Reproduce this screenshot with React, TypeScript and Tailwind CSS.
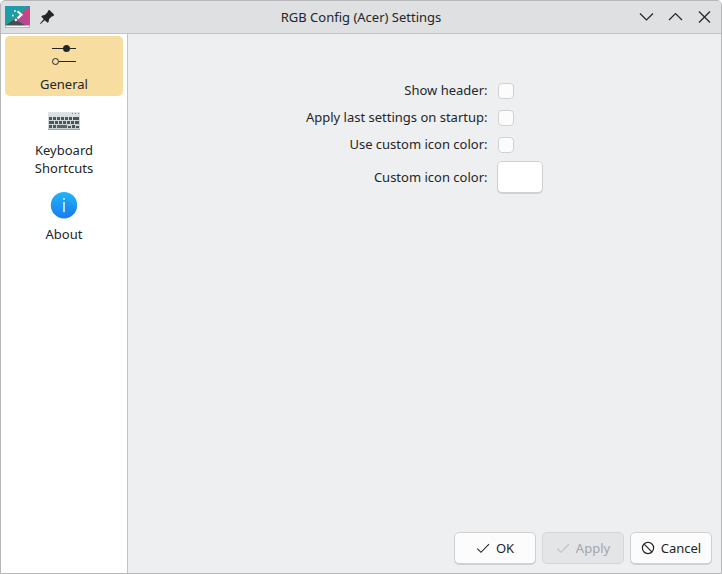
import React from "react";

function AppIcon() {
  return (
    <svg className="block h-[23px] w-[25px]" viewBox="0 0 25 23">
      <defs>
        <linearGradient id="teal" x1="0" y1="0" x2="1" y2="1">
          <stop offset="0" stopColor="#169fb4" />
          <stop offset="1" stopColor="#369586" />
        </linearGradient>
        <linearGradient id="pink" x1="0" y1="1" x2="1" y2="0">
          <stop offset="0" stopColor="#a24c9c" />
          <stop offset="1" stopColor="#d8417c" />
        </linearGradient>
      </defs>
      <rect width="25" height="20" fill="url(#teal)" />
      <path d="M25 0 9.500 13 21 20H25Z" fill="url(#pink)" />
      <path d="M0 20 9.500 13 21 20Z" fill="#45504f" />
      <path d="m12.500 5.200 4 3.600-4 3.600" fill="none" stroke="#fff" strokeWidth="2.100" />
      <circle cx="10" cy="5" r=".9" fill="#e6ffff" />
      <circle cx="7.800" cy="9.500" r=".9" fill="#e6ffff" />
      <circle cx="10.800" cy="14" r="1.200" fill="#fff" />
      <rect y="19.500" width="25" height="1.500" fill="#fbfbfb" />
      <rect y="20" width="1" height="2" fill="#a8adaf" />
      <rect x="24" y="20" width="1" height="2" fill="#a8adaf" />
      <rect x="1" y="21" width="23" height="1" fill="#b5b9bb" />
    </svg>
  );
}

function PinIcon() {
  return (
    <svg className="block h-4 w-4" viewBox="0 0 16 16" fill="#232629">
      <path d="M10.500 1 15 5.500 14.600 7 12.700 7.400 10 10.200 9.700 12.700 8.600 13.700 5.700 11.200 1.500 15 1 14.500 4.700 10.200 2.300 7.500 3.300 6.400 5.800 6 8.600 3.300 9 1.500Z" />
    </svg>
  );
}

function SlidersIcon() {
  return (
    <svg className="block h-8 w-8" viewBox="0 0 32 32" fill="none" stroke="#232629">
      <path d="M4 9.500H28M11 22.500H28" />
      <circle cx="18.500" cy="9.500" r="3.500" fill="#232629" stroke="none" />
      <circle cx="7.500" cy="22.500" r="3" />
    </svg>
  );
}

const keys: [number, number, number][] = [
  [1, 5, 3], [5, 5, 3], [9, 5, 3], [13, 5, 3], [17, 5, 3], [21, 5, 3], [25, 5, 6],
  [1, 9, 5], [7, 9, 3], [11, 9, 3], [15, 9, 3], [19, 9, 3], [23, 9, 3], [27, 9, 4],
  [1, 13, 3], [5, 13, 3], [9, 13, 10], [20, 14, 3], [24, 13, 3], [28, 14, 3],
];

function KeyboardIcon() {
  return (
    <svg className="block h-[18px] w-8" viewBox="0 0 32 18" shapeRendering="crispEdges">
      <defs>
        <linearGradient id="case" x1="0" y1="0" x2="0" y2="1">
          <stop offset="0" stopColor="#dde3e5" />
          <stop offset="1" stopColor="#c8d0d4" />
        </linearGradient>
      </defs>
      <rect width="32" height="18" fill="url(#case)" />
      <rect y="17" width="32" height="1" fill="#9aa4aa" />
      {keys.map(([x, y, w]) => (
        <rect key={`${x}-${y}`} x={x} y={y} width={w} height={y === 14 ? 2 : 3} fill={w === 10 ? "#566861" : "#4b5755"} />
      ))}
      <path d="M24 1h1v1h-1zM27 1h1v1h-1zM30 1h1v1h-1z" fill="#1abc7c" />
    </svg>
  );
}

function InfoIcon() {
  return (
    <svg className="block h-8 w-8" viewBox="0 0 32 32">
      <defs>
        <linearGradient id="blue" x1="0" y1="0" x2="0" y2="1">
          <stop offset="0" stopColor="#1fb4fa" />
          <stop offset="1" stopColor="#1d7df2" />
        </linearGradient>
      </defs>
      <circle cx="16" cy="16.200" r="13.200" fill="url(#blue)" />
      <path d="m17 9 11 11a13 13 0 0 1-10 9l-1-6Z" fill="#126fd8" opacity=".15" />
      <path d="M15 9h2v2h-2zM15 13h2v10h-2z" fill="#b5dffd" />
    </svg>
  );
}

function CheckIcon() {
  return (
    <svg className="block h-4 w-4" viewBox="0 0 16 16" fill="none" stroke="currentColor" strokeWidth="1.100">
      <path d="M2.300 8.700 6 12.300 14 4.200" />
    </svg>
  );
}

function CancelIcon() {
  return (
    <svg className="block h-4 w-4" viewBox="0 0 16 16" fill="none" stroke="currentColor" strokeWidth="1.200">
      <circle cx="8" cy="8" r="5.600" />
      <path d="m4.100 4.100 7.800 7.800" />
    </svg>
  );
}

function WindowGlyph({ d }: { d: string }) {
  return (
    <svg className="block h-4 w-4" viewBox="0 0 16 16" fill="none" stroke="#232629" strokeWidth="1.200">
      <path d={d} />
    </svg>
  );
}

function CheckRow({ label }: { label: string }) {
  return (
    <label className="flex h-[27px] items-center">
      <span className="w-[359.5px] pb-px text-right">{label}</span>
      <input type="checkbox" className="ml-[10.5px] h-4 w-4 appearance-none rounded-[4px] border border-[#cfd1d2] bg-[#fcfcfc]" />
    </label>
  );
}

function DialogButton({ icon, label, disabled = false }: { icon: React.ReactNode; label: string; disabled?: boolean }) {
  return (
    <button
      disabled={disabled}
      className={`flex h-8 w-[82px] items-center justify-center gap-[5px] rounded-[5px] border pr-px ${
        disabled ? "border-[#d5d6d8] bg-[#e3e5e7] text-[#a4a6a8]" : "border-[#cfd0d2] bg-[#fcfcfc] shadow-[0_1px_0_#d0d1d3]"
      }`}
    >
      <span className={disabled ? "opacity-60" : ""}>{icon}</span>
      <span>{label}</span>
    </button>
  );
}

export default function App() {
  return (
    <div className="flex h-[574px] w-[722px] flex-col overflow-hidden rounded-t-[5px] border border-[#b6b7b9] bg-[#eeeff1] font-['Noto_Sans',sans-serif] text-[13px] leading-[18px] text-[#232629]">
      <header className="flex h-[33px] shrink-0 items-center border-b border-[#c2c3c5] bg-[#dee0e2]">
        <div className="flex w-[90px] items-center gap-[9px] pl-1">
          <AppIcon />
          <PinIcon />
        </div>
        <h1 className="flex-1 text-center">RGB Config (Acer) Settings</h1>
        <div className="flex w-[90px] gap-[13px] pl-[8px]">
          <WindowGlyph d="M1 4.500 7.500 11l6.500-6.500" />
          <WindowGlyph d="M1 11 7.500 4.500l6.500 6.500" />
          <WindowGlyph d="m2 2.500 11 11m0-11-11 11" />
        </div>
      </header>
      <div className="flex min-h-0 flex-1">
        <nav className="flex w-[127px] shrink-0 flex-col border-r border-[#c2c3c5] bg-white pt-[2px] text-center">
          <div className="mx-1 flex h-[60px] w-[118px] flex-col items-center rounded-[5px] bg-[#f7dd9f] pt-[3px]">
            <SlidersIcon />
            <span className="mt-1">General</span>
          </div>
          <div className="mx-1 flex h-[84px] w-[118px] flex-col items-center pt-4">
            <KeyboardIcon />
            <span className="mt-[11px]">Keyboard<br />Shortcuts</span>
          </div>
          <div className="mx-1 flex h-[66px] w-[118px] flex-col items-center pt-[9px]">
            <InfoIcon />
            <span className="mt-1">About</span>
          </div>
        </nav>
        <main className="flex flex-1 flex-col">
          <div className="flex flex-col pt-[43px]">
            <CheckRow label="Show header:" />
            <CheckRow label="Apply last settings on startup:" />
            <CheckRow label="Use custom icon color:" />
            <div className="flex h-[38px] items-center">
              <span className="w-[359.5px] text-right">Custom icon color:</span>
              <button aria-label="Custom icon color" className="ml-[9.5px] h-8 w-[46px] rounded-[5px] border border-[#cfd0d2] bg-white shadow-[0_1px_0_#d0d1d3]" />
            </div>
          </div>
          <footer className="mt-auto flex justify-end gap-[6px] pr-[9px] pb-[9px]">
            <DialogButton icon={<CheckIcon />} label="OK" />
            <DialogButton icon={<CheckIcon />} label="Apply" disabled />
            <DialogButton icon={<CancelIcon />} label="Cancel" />
          </footer>
        </main>
      </div>
    </div>
  );
}
